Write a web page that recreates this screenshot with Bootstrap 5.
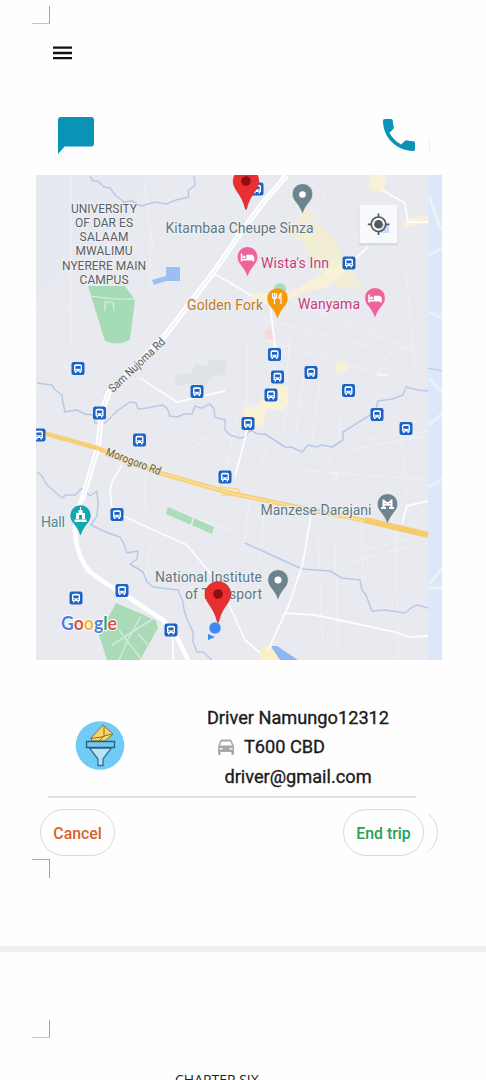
<!DOCTYPE html>
<html lang="en">
<head>
<meta charset="utf-8">
<meta name="viewport" content="width=device-width, initial-scale=1">
<title>Driver trip</title>
<link href="https://cdn.jsdelivr.net/npm/bootstrap@5.3.0/dist/css/bootstrap.min.css" rel="stylesheet">
<script src="https://cdn.jsdelivr.net/npm/bootstrap@5.3.0/dist/js/bootstrap.bundle.min.js"></script>
<style>
body{font-family:Roboto,"Liberation Sans",sans-serif;background:#fefefe;color:#1b1b1b;height:1080px;overflow:hidden}
svg{display:block}
.sheet{height:946px;padding-top:6px}
.corner{width:18px;height:18px;margin-left:32px;border-right:1px solid #a3a3a3;border-bottom:1px solid #c4c4c4;flex:none}
.corner.flip{border-bottom:0;border-top:1px solid #aaa;height:19px;margin-top:3px}
.menu-row{height:93px;padding:22px 0 0 53px}
.contact-row{height:58px;padding:0 56px 0 58px}
.contact-row .stub{width:1px;height:12px;background:#eee;margin:22px 0 0 14px}
.phone{margin-top:2px}
.trip-map{width:406px;height:485px;margin-left:36px}
.driver-info{height:136px;padding:42px 0 0 75px}
.driver-lines{width:260px;margin-left:43px;font-size:18.200px;font-weight:400;line-height:29.400px;-webkit-text-stroke:.35px #1b1b1b;padding-top:1px}
.rule{height:2px;width:368px;margin-left:48px;background:#e0e0e0}
.trip-actions{margin:11px 0 0 40px;height:47px;width:398px}
.btn-pill{height:47px;border:1px solid #d9d9d9;border-radius:24px;font-size:15.800px;font-weight:500;padding:2px 0 0;background:#fefefe}
.btn-cancel{width:75px;color:#d8622b}
.btn-end{width:81px;color:#2a9e56}
.page-gap{height:6px;background:#efefef}
.chapter{font-family:"Open Sans","Noto Sans",sans-serif;font-size:14px;line-height:18px;font-weight:500;margin:33px 0 0 175px;color:#222;white-space:nowrap}
.trip-map text{font-family:Roboto,sans-serif;font-size:14px;paint-order:stroke;stroke:#eef0f3;stroke-width:2px;stroke-linejoin:round}
.river{fill:none;stroke:#b9c8ea;stroke-width:1.500;stroke-linejoin:round}
.road{fill:none;stroke:#fdfdfe;stroke-width:1.800;stroke-linejoin:round}
.lane{fill:none;stroke:#f1f3f6;stroke-width:.8}
</style>
</head>
<body>
<main class="sheet d-flex flex-column">
  <div class="corner"></div>
  <header class="menu-row"><svg width="20" height="14" fill="none" stroke="#111" stroke-width="2.300"><path d="M0 1.700h19M0 7h19M0 12.200h19"/></svg></header>
  <div class="contact-row d-flex justify-content-between align-items-start">
    <svg width="36" height="37" viewBox="2 2 20 20" preserveAspectRatio="none" fill="#0a93b7"><path d="M20.500 2H3.500C2.600 2 2 2.600 2 3.500V22l3.700-4H20.500c.9 0 1.500-.6 1.500-1.500V3.500C22 2.600 21.400 2 20.500 2Z"/></svg>
    <div class="d-flex"><svg class="phone" width="32" height="32" viewBox="3 3 18 18" fill="#0a93b7"><path d="M6.620 10.790c1.440 2.830 3.760 5.140 6.590 6.590l2.200-2.200c.27-.27.67-.36 1.020-.24 1.120.37 2.330.57 3.570.57.55 0 1 .45 1 1V20c0 .55-.45 1-1 1C10.610 21 3 13.390 3 4c0-.55.45-1 1-1h3.500c.55 0 1 .45 1 1 0 1.250.2 2.450.57 3.570.11.35.03.74-.25 1.020Z"/></svg><span class="stub"></span></div>
  </div>
  <svg class="trip-map flex-shrink-0" viewBox="36 175 406 485">
    <defs>
      <path id="pin" d="M0-10.300A10 10 0 0 0-10.200 0C-10.200 7-4 9-.7 18.500Q0 20.500.7 18.500C4 9 10.200 7 10.200 0A10 10 0 0 0 0-10.300Z"/>
      <g id="redpin"><path d="M0-12.500A12.700 12.700 0 0 0-12.800 0C-12.800 9-4 13-.9 27Q0 30 .9 27C4 13 12.800 9 12.800 0A12.700 12.700 0 0 0 0-12.500Z" fill="#ea2f31" stroke="#c8252a" stroke-width=".6"/><circle r="4.800" fill="#8c0f12"/></g>
      <g id="stop"><rect x="-6.500" y="-6.500" width="13" height="13" rx="2.200" fill="#1d63c6"/><path d="M-4-2.500Q-4-4.300-2.200-4.300H2.200Q4-4.300 4-2.500V3H3V4.500H1.500V3H-1.500V4.500H-3V3H-4Z" fill="#fff"/><path d="M-2.600-2.500H2.600V.3H-2.600Z" fill="#1d63c6"/><path d="M-2.700 1.600h1.200M1.500 1.600h1.200" stroke="#1d63c6"/></g>
      <g id="bed" fill="none" stroke="#fff" stroke-width="1.500"><path d="M-6-4.500V3.500M-6 1.800H6V3.500M6 2V-1.500"/><path d="M-1.200-3.200H4.500Q6-3.200 6-1.500V1.500H-1.200Z" fill="#fff" stroke="none"/><circle cx="-3.500" cy="-1" r="1.600" fill="#fff" stroke="none"/></g>
    </defs>
    <rect x="36" y="175" width="406" height="485" fill="#e8eaef"/>
    <path d="M36 175H160L110 230 36 300Z" fill="#e5eaf1" opacity=".7"/>
    <path d="M428 175h14v485h-14z" fill="#dce8f7"/>
    <path d="M429 196 441 230M429 255 442 248M429 312 442 318M429 378 442 393M429 425 442 414M428 487 442 479M429 584 442 569M429 588h13" fill="none" stroke="#e9f2fa" stroke-width="3"/>
    <path d="M428 368l14 3" stroke="#a9c9e5"/>
    <!-- small streets -->
    <path class="lane" d="M71 175v170M150 230v60l45 26M36 307h38M60 354l18 40M144 180l9 70M180 330l50 25M160 420l70 30M190 440l50 25M50 560l30-30M80 600l-30 45M145 470v40l42 35M197 445l30-20M225 475l12-60M247 340v88M235 405h45M260 470l8-28M325 450l15 34M335 480l10-30M365 440l63-9M350 450l78-15M401 430l6 70M361 510l2 70M300 470l128 10M250 315l150 40M265 340l120 36M290 300l120 50M300 345l60-88M320 360l55-75M340 370l52-70M370 385l38-58M290 330l-6 100M310 210l90 55M330 180l-30 90M350 190l70 80M405 260l10 110M245 385l60 25M305 370l-10 65M320 380l-8 62M338 398l2 40M400 345l24 12M250 490l-5 55M265 500l-5 62M285 580l130-35M318 530l5 120M335 540l3 110M395 520l4 140M345 555l80-20M200 520l35 12M155 525l-12 60M50 500l25 20"/>
    <path d="M377 375h11" stroke="#fff" fill="none"/>
    <!-- districts, parks, water -->
    <path d="M302 208l10 4 3 12 8 2 17 22 1 10 12 11 3 9 8 10-10 2-18-4-4-10-12-4-12-18-4-11-12-8z" fill="#f6efcd" opacity=".75"/>
    <path d="M252 292l35 2 52-30 6 7-20 18-15 1-27 13-30 2zM370 175h16v6l-2 8-8 6-7-9zM404 220l24-6v9l-24 5zM335 364l8-4 6 6-5 7-7 1zM271 386h16l2 17-7 8-14-2-6 19-12-1-9-19 14-1z" fill="#faf2d2" opacity=".85"/>
    <path d="M175 376l17-3 3-9 12 2 2-6h17v14l-14 3-7 9-12-3-17 3z" fill="#dfe2e6"/>
    <path d="M88 286h37l10 14-5 39q-10 8-25 2Z" fill="#a5dcb6"/>
    <g opacity=".8"><path d="M90 296l16 2 9 1h20M105 311v-9h8l1 9" stroke="#e9f5ed" stroke-width="1.200" fill="none"/></g>
    <path d="M166 267h14v14h-14l-12 4-2-5 14-4z" fill="#9cbef4"/>
    <path d="M168 507l46 20-2 7-46-20z" fill="#abddb9"/><path d="M194 516l-3 10" stroke="#e8eaef" stroke-width="1.500"/>
    <path d="M116 603l28 12 12 6 2 7-18 32h-33l-8-25Z" fill="#a9dbb9"/>
    <path d="M112 645l42-27M119 630l22 29M141 616l-16 29M138 634l12 13M127 642l-8 18" stroke="#d3eadb" stroke-width="1.500" fill="none"/>
    <path d="M272 646h5l21 14h-21l-6-8z" fill="#8eb5f5"/>
    <path d="M259 652l6-6 7 2 8 12h-21z" fill="#fbefc5"/>
    <path d="M265 330h8v9h-8z" fill="#f8d8d9"/>
    <ellipse cx="280" cy="289" rx="6" ry="6" fill="#a8dfba"/>
    <!-- rivers -->
    <path class="river" d="M90 176l3 5 5 0 6 6 6 1 6 8 8 6 8-1 9 5 14-4 11 2 10-4 13-3-1-6 7-6-1-9"/>
    <path class="river" d="M37 383l7 1 8 1 3 5 7 5 1 8 2 9 5-1 7-1 8 4 8 1 2 8 10 0 12-12 13-9 6 1 2 6 9-1 15-3 5 3 3 8 7 1 7-3 8 0 3-8 6 2 9-4 4 5 1 8 10 3 0 10 5 5 10 3 5-1 5-7 8 4 7 0 20 13 6 0 11 5 6-7 8 2 6-2 10 2 11-7 0-8 32-20 3-11 14-2 11-4 3-8 11 3 11 1"/>
    <path class="river" d="M37 472l5 4 5 9 7 6 8 7 4-3 9 0 7-7 8 8 7-5 1 13-1 12-6 9 17 8 12 4 4 7 3 9 11-2-1 8-7 5 13 8 4 10 6 5 25 3 5 12 1 8 3 9 6 13 0 10 4 10 6 0 9 8M245 543l57 26 28 2 12 7 18 2 2 10 4 5 6 16 13-1 20 3 6-5 6-3 11 3"/>
    <!-- streets -->
    <path class="road" d="M122 465l-10 17-2 10 2 16 13 9 62 28 23 28 20 34 15 33 15 13M140 378l37 24 48-11M248 427l-13 50M311 515l-8 48-15 44-20 43M285 613l30 2 80 17 14 5 19-1M272 300l-1 12 4 35M382 190l23 13 3 19 21 0M368 247l-20 18M402 523l5-17 21-5M213 273l26 15 13 8M163 620l10 20 0 20"/>
    <path d="M287 175l-25 29-25 34-24 35-50 65-54 54-7 18-4 37-16 53" fill="none" stroke="#fff" stroke-width="5.500" stroke-linejoin="round"/>
    <path d="M287 175l-25 29-25 34-24 35-50 65-54 54-7 18-4 37-16 53" fill="none" stroke="#e6e8ee" stroke-width="1"/>
    <path d="M84 495q-8 15-9 32 0 26 14 44 15 12 36 24l38 25 14 17 11 23" fill="none" stroke="#fff" stroke-width="4.500"/>
    <path d="M36 431l61 17 63 25 70 20 72 15 65 13 61 14" fill="none" stroke="#f7cf75" stroke-width="4.500"/>
    <path d="M160 473l70 20 72 15 63 13" fill="none" stroke="#fae5ad" stroke-width="1.200"/>
    <path d="M365 520l63 15" stroke="#f7cb6c" stroke-width="6"/>
    <path d="M220 487l18 2 3 7-18-1z" fill="none" stroke="#fad67a" stroke-width="1.500"/>
    <!-- bus stops -->
    <use href="#stop" x="257" y="189"/><use href="#stop" x="349" y="263"/><use href="#stop" x="78" y="368.500"/><use href="#stop" x="197" y="391.500"/><use href="#stop" x="99.500" y="413"/><use href="#stop" x="39" y="435"/><use href="#stop" x="139.500" y="440"/><use href="#stop" x="225" y="477"/><use href="#stop" x="274.500" y="354.500"/><use href="#stop" x="277.500" y="377"/><use href="#stop" x="311" y="372.500"/><use href="#stop" x="271" y="395"/><use href="#stop" x="348.500" y="390.500"/><use href="#stop" x="248" y="423.500"/><use href="#stop" x="377" y="414.500"/><use href="#stop" x="406" y="428.500"/><use href="#stop" x="117" y="514.500"/><use href="#stop" x="122" y="590.500"/><use href="#stop" x="76" y="598"/><use href="#stop" x="171" y="630"/>
    <!-- labels -->
    <g fill="#5a6065">
      <g text-anchor="middle"><text style="font-size:12px" x="104" y="213" textLength="66">UNIVERSITY</text><text style="font-size:12px" x="104" y="227" textLength="58">OF DAR ES</text><text style="font-size:12px" x="104" y="241" textLength="49">SALAAM</text><text style="font-size:12px" x="104" y="255" textLength="57">MWALIMU</text><text style="font-size:12px" x="104" y="269.500" textLength="84">NYERERE MAIN</text><text style="font-size:12px" x="104" y="283.700" textLength="49">CAMPUS</text></g>
      <text style="font-size:11.500px" transform="translate(113 393) rotate(-43.500)" textLength="73" lengthAdjust="spacingAndGlyphs">Sam Nujoma Rd</text>
      <text style="font-size:11.500px;fill:#655b45;stroke:#f2ead6" transform="translate(105 455) rotate(20.500)" textLength="58" lengthAdjust="spacingAndGlyphs">Morogoro Rd</text>
    </g>
    <g fill="#5f7981"><text x="165.500" y="233.300" textLength="148">Kitambaa Cheupe Sinza</text><text x="260.500" y="515" textLength="111">Manzese Darajani</text><text x="155" y="582" textLength="107">National Institute</text><text x="185" y="599" textLength="77">of Transport</text></g>
    <text x="41" y="526.500" fill="#4c8d94" textLength="24">Hall</text>
    <g fill="#c83c78"><text x="261" y="267.500" textLength="68">Wista's Inn</text><text x="298" y="308.500" textLength="62">Wanyama</text></g>
    <text x="187" y="309.500" fill="#c47c26" textLength="76">Golden Fork</text>
    <text x="61" y="630" style="font-size:18px;font-family:Lato,sans-serif;font-weight:700;stroke:#fff" textLength="56" lengthAdjust="spacingAndGlyphs"><tspan fill="#4b7fe0">G</tspan><tspan fill="#df5147">o</tspan><tspan fill="#edb832">o</tspan><tspan fill="#4b7fe0">g</tspan><tspan fill="#39a55d">l</tspan><tspan fill="#df5147">e</tspan></text>
    <!-- places -->
    <g fill="#6c848e" stroke="#f3f5f7" stroke-width=".5"><use href="#pin" x="302.500" y="194"/><use href="#pin" x="278" y="580"/><use href="#pin" x="387.500" y="504"/></g>
    <circle cx="302.500" cy="194.500" r="3.300" fill="#fff"/><circle cx="278" cy="580" r="3.500" fill="#fff"/>
    <path d="M383.500 499.500v9.500M391.500 499.500v9.500M381 508h5M389 508h5M383 504.800h9M383.500 500.500q4 5 8 0" fill="none" stroke="#fff" stroke-width="2"/>
    <g fill="#ee639b" stroke="#f3f5f7" stroke-width=".5"><use href="#pin" x="247.500" y="257"/><use href="#pin" x="375" y="298"/></g>
    <use href="#bed" x="247.500" y="258"/><use href="#bed" x="375" y="299"/>
    <use href="#pin" x="277.500" y="298.500" fill="#f39b0d"/>
    <path d="M272.500 293v3.500q0 2 2 2 2 0 2-2V293M274.500 293v11M281 304V293.500q-2 1-2 5h2" stroke="#fff" stroke-width="1.200" fill="none"/>
    <use href="#pin" x="80.500" y="515.500" fill="#12a8b0"/>
    <path d="M74.500 519.500h12v2.500h-12zM76 513h9v6h-9zM78.500 510h4v3h-4zM80 507h1v3h-1z" fill="#fff"/><path d="M79 515h3v4h-3z" fill="#12a8b0"/>
    <use href="#redpin" x="246" y="181"/>
    <circle cx="215" cy="628" r="6.200" fill="#4285f4" stroke="#e7effc"/><path d="M208 634l7 3-7 3z" fill="#4285f4"/>
    <use href="#redpin" x="218" y="594"/>
    <!-- my-location control -->
    <rect x="358.500" y="205.500" width="40" height="40" rx="2" fill="#ccd0d6" opacity=".6"/><rect x="359.500" y="205" width="38" height="38" rx="1.500" fill="#f8f9fb"/>
    <path d="M380 224h9v9h-9z" fill="#c7dcf7"/><circle cx="378.500" cy="224.300" r="7.300" stroke="#55595e" stroke-width="1.700" fill="none"/><circle cx="378.500" cy="224.300" r="4.300" fill="#55595e"/><path d="M378.500 213.500v4M378.500 231v4M367.800 224.300h4M385.500 224.300h4" stroke="#55595e" stroke-width="1.700"/>
  </svg>
  <section class="driver-info d-flex align-items-start">
    <svg style="margin-top:19px" width="50" height="50" viewBox="0 0 50 50"><circle cx="25" cy="24.500" r="24.300" fill="#70ccf5"/><path d="M16 17 28 4l10 9-8 7H17z" fill="#f8d365" stroke="#836f38"/><path d="m16 17.500 13-2 0-10M29 15l8-2M29 15l-5 5" fill="none" stroke="#836f38"/><path d="M14.500 27 23 38v6.500h5V38l8.500-11z" fill="#b6e5fa" stroke="#396f91" stroke-width="1.300"/><path d="M11.500 20.500h28v6h-28z" fill="#79c9ed" stroke="#285f83" stroke-width="1.400"/></svg>
    <div class="driver-lines d-flex flex-column align-items-center flex-shrink-0">
      <span>Driver Namungo12312</span>
      <div class="d-flex align-items-center" style="transform:translateX(-27px)"><svg style="margin-right:9px" width="18" height="16" viewBox="0 0 18 16" fill="#a7a7a7"><path fill-rule="evenodd" d="M3.500 1Q4 .5 5 .5h8q1 0 1.500.8L17 7.500V15q0 1-1 1h-1.500V13h-11v3H2q-1 0-1-1V7.500ZM4.500 2.500 3 6.500h12l-1.500-4ZM2.500 9v1.500h3V9ZM12.500 9v1.500h3V9Z"/></svg><span>T600 CBD</span></div>
      <span>driver@gmail.com</span>
    </div>
  </section>
  <div class="rule flex-shrink-0"></div>
  <div class="trip-actions d-flex flex-shrink-0">
    <button class="btn btn-pill btn-cancel">Cancel</button>
    <button class="btn btn-pill btn-end ms-auto">End trip</button>
    <svg width="14" height="47" fill="none" stroke="#d9d9d9"><path d="M4.500 5q9 7 9 18.500T4.500 42"/></svg>
  </div>
  <div class="corner flip"></div>
</main>
<div class="page-gap"></div>
<section style="padding-top:68px"><div class="corner"></div><h1 class="chapter">CHAPTER SIX</h1></section>
</body>
</html>
